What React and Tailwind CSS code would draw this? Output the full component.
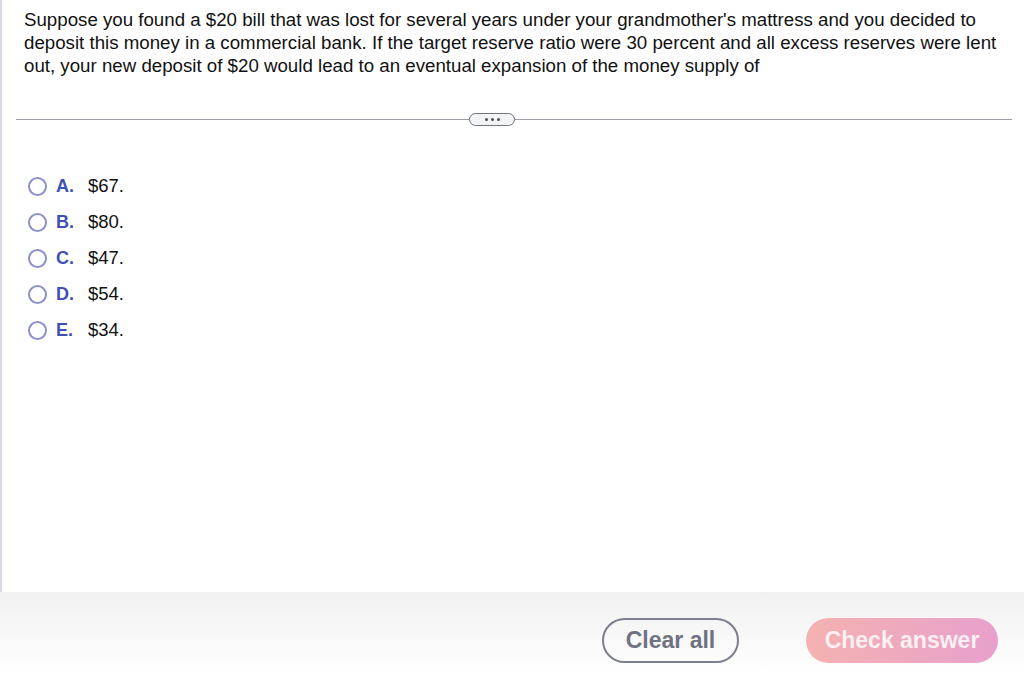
import React, { useState } from "react";

const options = [
  { key: "A", value: "$67." },
  { key: "B", value: "$80." },
  { key: "C", value: "$47." },
  { key: "D", value: "$54." },
  { key: "E", value: "$34." },
];

function App() {
  const [selected, setSelected] = useState(null);

  return (
    <div className="h-[676px] w-[1024px] flex flex-col bg-white font-['Liberation_Sans',Arial,sans-serif] overflow-hidden">
      <div className="h-[592px] border-l-2 border-[#d9d9e3] flex flex-col">
        <p className="pl-[22px] pr-[20px] pt-[8px] text-[18.7px] leading-[23px] text-[#111]">
          Suppose you found a $20 bill that was lost for several years under your grandmother's mattress and you
          decided to deposit this money in a commercial bank. If the target reserve ratio were 30 percent and all
          excess reserves were lent out, your new deposit of $20 would lead to an eventual expansion of the money
          supply of
        </p>

        {/* divider with expand pill */}
        <div className="mt-[36px] ml-[14px] mr-[12px] flex items-center">
          <div className="w-[453px] h-px bg-[#9a9ca8]" />
          <button className="w-[46px] h-[13px] rounded-full border border-[#6f7380] bg-[#f3f4f6] flex items-center justify-center gap-[3px]">
            <span className="w-[3px] h-[3px] rounded-full bg-[#4b4f5c]" />
            <span className="w-[3px] h-[3px] rounded-full bg-[#4b4f5c]" />
            <span className="w-[3px] h-[3px] rounded-full bg-[#4b4f5c]" />
          </button>
          <div className="flex-1 h-px bg-[#9a9ca8]" />
        </div>

        <div className="mt-[49px] pl-[26px] flex flex-col gap-[14px]">
          {options.map((o) => (
            <label
              key={o.key}
              className="flex items-center h-[22px] cursor-pointer"
              onClick={() => setSelected(o.key)}
            >
              <span className="w-[19px] h-[19px] rounded-full border-2 border-[#8a90cc] flex items-center justify-center">
                {selected === o.key && <span className="w-[9px] h-[9px] rounded-full bg-[#3f4fb5]" />}
              </span>
              <span className="ml-[9px] w-[32px] text-[18px] font-bold text-[#3e4fb8]">{o.key}.</span>
              <span className="text-[18.5px] text-[#111]">{o.value}</span>
            </label>
          ))}
        </div>
      </div>

      <div className="flex-1 bg-gradient-to-b from-[#f1f1f1] to-white flex items-start justify-end pt-[26px] pr-[26px]">
        <button className="w-[137px] h-[45px] rounded-full border-2 border-[#7c7f8c] text-[23px] font-bold text-[#6f7280]">
          Clear all
        </button>
        <button className="ml-[67px] w-[192px] h-[45px] rounded-full bg-gradient-to-r from-[#f4b2b0] to-[#e8a0cc] text-[23px] font-bold text-[#fdf0f3]">
          Check answer
        </button>
      </div>
    </div>
  );
}

export default App;
